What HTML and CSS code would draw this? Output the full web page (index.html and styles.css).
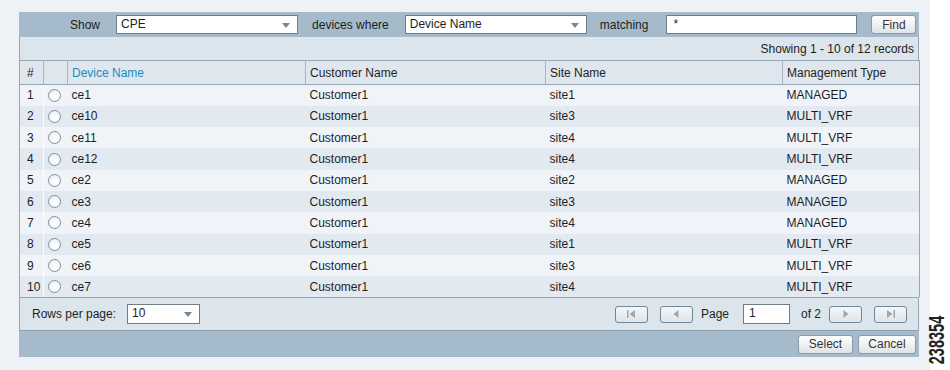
FILE: index.html
```html
<!DOCTYPE html>
<html>
<head>
    <title>Select CPE</title>
    <link rel="stylesheet" href="styles.css">
</head>
<body>
    <div class="page">
        <div class="panel">
            <div class="filter-bar">
                <span class="label show-label">Show</span>
                <div class="select select-type">CPE<span class="arrow"></span></div>
                <span class="label where-label">devices where</span>
                <div class="select select-field">Device Name<span class="arrow"></span></div>
                <span class="label match-label">matching</span>
                <div class="text-input match-input">*</div>
                <button class="btn find-btn">Find</button>
            </div>
            <div class="summary">Showing 1 - 10 of 12 records</div>
            <table class="grid">
                <colgroup>
                    <col class="c-num">
                    <col class="c-radio">
                    <col class="c-device">
                    <col class="c-customer">
                    <col class="c-site">
                    <col class="c-type">
                </colgroup>
                <thead>
                    <tr>
                        <th>#</th>
                        <th></th>
                        <th class="sorted">Device Name</th>
                        <th>Customer Name</th>
                        <th>Site Name</th>
                        <th>Management Type</th>
                    </tr>
                </thead>
                <tbody>
                    <tr><td>1</td><td><span class="radio"></span></td><td>ce1</td><td>Customer1</td><td>site1</td><td>MANAGED</td></tr>
                    <tr><td>2</td><td><span class="radio"></span></td><td>ce10</td><td>Customer1</td><td>site3</td><td>MULTI_VRF</td></tr>
                    <tr><td>3</td><td><span class="radio"></span></td><td>ce11</td><td>Customer1</td><td>site4</td><td>MULTI_VRF</td></tr>
                    <tr><td>4</td><td><span class="radio"></span></td><td>ce12</td><td>Customer1</td><td>site4</td><td>MULTI_VRF</td></tr>
                    <tr><td>5</td><td><span class="radio"></span></td><td>ce2</td><td>Customer1</td><td>site2</td><td>MANAGED</td></tr>
                    <tr><td>6</td><td><span class="radio"></span></td><td>ce3</td><td>Customer1</td><td>site3</td><td>MANAGED</td></tr>
                    <tr><td>7</td><td><span class="radio"></span></td><td>ce4</td><td>Customer1</td><td>site4</td><td>MANAGED</td></tr>
                    <tr><td>8</td><td><span class="radio"></span></td><td>ce5</td><td>Customer1</td><td>site1</td><td>MULTI_VRF</td></tr>
                    <tr><td>9</td><td><span class="radio"></span></td><td>ce6</td><td>Customer1</td><td>site3</td><td>MULTI_VRF</td></tr>
                    <tr><td>10</td><td><span class="radio"></span></td><td>ce7</td><td>Customer1</td><td>site4</td><td>MULTI_VRF</td></tr>
                </tbody>
            </table>
            <div class="pager">
                <span class="label">Rows per page:</span>
                <div class="select select-rows">10<span class="arrow"></span></div>
                <div class="pager-nav">
                    <button class="nav-btn first-btn">
                        <svg width="10" height="8" viewBox="0 0 10 8"><rect x="1" y="0" width="1.5" height="8" fill="#9aa8b3"/><path d="M9 0 L3.5 4 L9 8 Z" fill="#9aa8b3"/></svg>
                    </button>
                    <button class="nav-btn prev-btn">
                        <svg width="8" height="8" viewBox="0 0 8 8"><path d="M6.5 0 L1.5 4 L6.5 8 Z" fill="#9aa8b3"/></svg>
                    </button>
                    <span class="label page-label">Page</span>
                    <div class="text-input page-input">1</div>
                    <span class="label of-label">of 2</span>
                    <button class="nav-btn next-btn">
                        <svg width="8" height="8" viewBox="0 0 8 8"><path d="M1.5 0 L6.5 4 L1.5 8 Z" fill="#9aa8b3"/></svg>
                    </button>
                    <button class="nav-btn last-btn">
                        <svg width="10" height="8" viewBox="0 0 10 8"><path d="M1 0 L6.5 4 L1 8 Z" fill="#9aa8b3"/><rect x="7.5" y="0" width="1.5" height="8" fill="#9aa8b3"/></svg>
                    </button>
                </div>
            </div>
            <div class="actions">
                <button class="btn select-btn">Select</button>
                <button class="btn cancel-btn">Cancel</button>
            </div>
        </div>
    </div>
    <div class="figure-id">238354</div>
</body>
</html>
```

FILE: styles.css
```css
:root {
    --bar-color: #a5bbcb;
    --light-bar: #dce4ec;
    --row-light: #f0f4f9;
    --row-dark: #e2e9f1;
    --border-color: #95a7b4;
    --text-color: #1e1e1e;
    --link-color: #1b8bc4;
}

* {
    margin: 0;
    padding: 0;
    box-sizing: border-box;
}

body {
    background: #ffffff;
    font-family: 'Liberation Sans', Arial, sans-serif;
    font-size: 12px;
    color: var(--text-color);
    width: 950px;
    height: 370px;
    overflow: hidden;
    position: relative;
}

.page {
    width: 930px;
    height: 370px;
    background: #eef2f6;
    padding: 12px 0 0 19px;
}

.panel {
    width: 900px;
}

.label {
    white-space: nowrap;
}

/* Filter bar */
.filter-bar {
    height: 25px;
    background: var(--bar-color);
    display: flex;
    align-items: center;
}

.show-label {
    margin-left: 51px;
}

.select {
    position: relative;
    height: 19px;
    background: #fff;
    border: 1px solid #6e7d88;
    padding: 2px 0 0 4px;
    line-height: 13px;
}

.arrow {
    position: absolute;
    right: 7px;
    top: 7px;
    border-left: 4px solid transparent;
    border-right: 4px solid transparent;
    border-top: 5px solid #7b8790;
}

.select-type {
    width: 182px;
    margin-left: 16px;
}

.where-label {
    margin-left: 14px;
}

.select-field {
    width: 182px;
    margin-left: 16px;
}

.match-label {
    margin-left: 13px;
}

.text-input {
    height: 19px;
    background: #fff;
    border: 1px solid #6e7d88;
    padding: 2px 0 0 6px;
    line-height: 13px;
}

.match-input {
    width: 191px;
    margin-left: 18px;
}

.btn {
    font-family: 'Liberation Sans', Arial, sans-serif;
    font-size: 12px;
    color: #333;
    height: 19px;
    border: 1px solid #8d9aa3;
    border-radius: 3px;
    background: linear-gradient(#ffffff, #e0e3e6);
}

.find-btn {
    width: 45px;
    margin-left: 14px;
}

/* Summary */
.summary {
    height: 23px;
    background: var(--light-bar);
    border-left: 1px solid var(--border-color);
    border-right: 1px solid var(--border-color);
    text-align: right;
    padding: 5px 4px 0 0;
    font-size: 12px;
}

/* Grid */
.grid {
    width: 900px;
    border-collapse: collapse;
    table-layout: fixed;
    border-left: 1px solid var(--border-color);
    border-right: 1px solid var(--border-color);
}

.c-num { width: 24px; }
.c-radio { width: 24px; }
.c-device { width: 238px; }
.c-customer { width: 240px; }
.c-site { width: 237px; }
.c-type { width: 137px; }

.grid th {
    height: 24px;
    background: #dfe6ed;
    border-top: 1px solid var(--border-color);
    border-bottom: 1px solid var(--border-color);
    border-right: 1px solid #a8b6c1;
    font-weight: normal;
    text-align: left;
    padding: 0 4px;
    white-space: nowrap;
}

.grid th:first-child {
    padding-left: 7px;
}

.grid th:last-child {
    border-right: none;
}

.grid th.sorted {
    color: var(--link-color);
}

.grid td {
    height: 21.3px;
    padding: 0 4px;
    white-space: nowrap;
}

.grid td:first-child {
    padding-left: 7px;
    padding-right: 0;
    border-right: 1px solid #fbfcfe;
}

.grid td:nth-child(2) {
    padding: 0 0 0 4px;
}

.grid tbody tr:nth-child(odd) {
    background: var(--row-light);
}

.grid tbody tr:nth-child(even) {
    background: var(--row-dark);
}

.radio {
    display: block;
    width: 13px;
    height: 13px;
    border-radius: 50%;
    border: 1px solid #7d90a2;
    background: radial-gradient(circle at 60% 65%, #ffffff 0%, #f4f6f8 55%, #dde2e6 100%);
}

/* Pager */
.pager {
    height: 33px;
    background: var(--light-bar);
    border: 1px solid var(--border-color);
    border-bottom: none;
    display: flex;
    align-items: center;
    padding-left: 12px;
}

.select-rows {
    width: 73px;
    height: 20px;
    margin-left: 11px;
}

.pager-nav {
    margin-left: auto;
    margin-right: 11px;
    display: flex;
    align-items: center;
}

.nav-btn {
    width: 33px;
    height: 17px;
    border: 1px solid #71879a;
    border-radius: 3px;
    background: linear-gradient(#f5f7f9, #dde4ea);
    display: flex;
    align-items: center;
    justify-content: center;
}

.prev-btn {
    margin-left: 12px;
}

.page-label {
    margin-left: 8px;
}

.page-input {
    width: 47px;
    height: 20px;
    margin-left: 14px;
    padding-left: 5px;
}

.of-label {
    margin-left: 11px;
}

.next-btn {
    margin-left: 8px;
}

.last-btn {
    margin-left: 12px;
}

/* Bottom actions */
.actions {
    height: 27px;
    background: var(--bar-color);
    border-top: 1px solid #8d9fad;
    display: flex;
    justify-content: flex-end;
    align-items: center;
    gap: 5px;
    padding-right: 3px;
}

.select-btn {
    width: 55px;
}

.cancel-btn {
    width: 58px;
}

.figure-id {
    position: absolute;
    left: 900px;
    top: 331px;
    width: 74px;
    height: 18px;
    font-size: 22px;
    font-weight: bold;
    line-height: 18px;
    color: #222;
    transform: rotate(-90deg) scaleX(0.66);
    text-align: center;
    white-space: nowrap;
}
```
